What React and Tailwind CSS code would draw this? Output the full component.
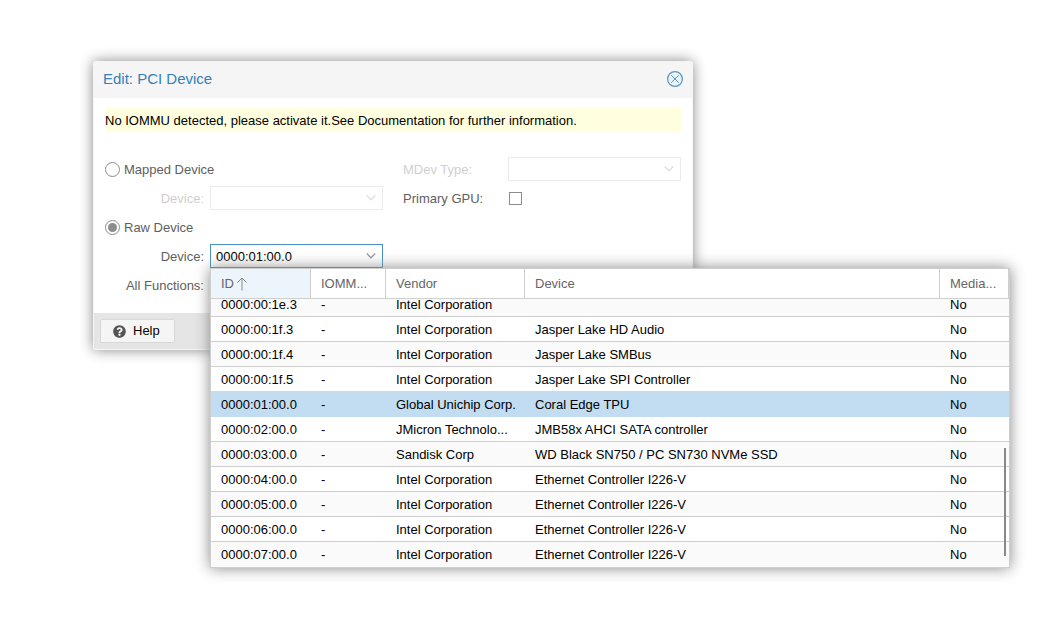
import { useLayoutEffect, useRef } from "react";
import { FaQuestionCircle } from "react-icons/fa";

const DEVICES = [
  ["0000:00:1e.3", "Intel Corporation", ""],
  ["0000:00:1f.3", "Intel Corporation", "Jasper Lake HD Audio"],
  ["0000:00:1f.4", "Intel Corporation", "Jasper Lake SMBus"],
  ["0000:00:1f.5", "Intel Corporation", "Jasper Lake SPI Controller"],
  ["0000:01:00.0", "Global Unichip Corp.", "Coral Edge TPU"],
  ["0000:02:00.0", "JMicron Technolo...", "JMB58x AHCI SATA controller"],
  ["0000:03:00.0", "Sandisk Corp", "WD Black SN750 / PC SN730 NVMe SSD"],
  ["0000:04:00.0", "Intel Corporation", "Ethernet Controller I226-V"],
  ["0000:05:00.0", "Intel Corporation", "Ethernet Controller I226-V"],
  ["0000:06:00.0", "Intel Corporation", "Ethernet Controller I226-V"],
  ["0000:07:00.0", "Intel Corporation", "Ethernet Controller I226-V"],
];
const SELECTED = 4;

function Chevron() {
  return (
    <svg viewBox="0 0 10 6" className="pointer-events-none absolute top-[9px] right-[7px] h-1.5 w-2.5" fill="none" stroke="#999" strokeWidth="1.3" aria-hidden="true">
      <path d="M0.8 0.5 5 4.8 9.2 0.5" />
    </svg>
  );
}

function Field({ id, label, align = "text-left", disabled, children }) {
  return (
    <div className={`flex h-6 items-center ${disabled ? "opacity-30" : ""}`}>
      <label htmlFor={id} className={`w-[105px] shrink-0 pt-0.5 pr-1.5 text-[#606060] ${align}`}>
        {label}
      </label>
      {children}
    </div>
  );
}

function DisabledSelect({ id }) {
  return (
    <div className="relative flex-1">
      <select id={id} disabled className="block h-6 w-full appearance-none border border-[#c0c0c0] bg-white px-1.5" />
      <Chevron />
    </div>
  );
}

function Radio({ id, label, checked }) {
  return (
    <div className="flex h-6 items-center gap-1 text-[#606060]">
      <input
        type="radio"
        name="source"
        id={id}
        defaultChecked={checked}
        className="h-[15px] w-[15px] appearance-none rounded-full border border-[#8c8c8c] bg-white bg-clip-content p-0.5 checked:bg-[#8c8c8c]"
      />
      <label htmlFor={id} className="pt-0.5">{label}</label>
    </div>
  );
}

function Checkbox({ id }) {
  return <input type="checkbox" id={id} className="ml-px h-[13px] w-[13px] appearance-none border border-[#8c8c8c] bg-white" />;
}

function HeaderCell({ children, className = "" }) {
  return (
    <th className={`sticky top-0 h-[30px] truncate border-r border-b border-[#cfcfcf] pr-2 pl-2.5 text-left font-normal text-[#666] ${className}`}>
      {children}
    </th>
  );
}

function DevicePicker() {
  const scroller = useRef(null);
  useLayoutEffect(() => {
    scroller.current.scrollTop = scroller.current.scrollHeight;
  }, []);

  return (
    <div className="absolute top-full left-0 z-10 w-[800px] border border-[#cfcfcf] bg-white shadow-[0_0_14px_#888]">
      <div ref={scroller} className="max-h-[298px] overflow-y-auto [scrollbar-width:none]">
        <table className="w-full table-fixed border-separate border-spacing-0">
          <colgroup>
            <col className="w-[100px]" />
            <col className="w-[75px]" />
            <col className="w-[139px]" />
            <col />
            <col className="w-[69px]" />
          </colgroup>
          <thead>
            <tr>
              <HeaderCell className="bg-[#ecf4fc]">
                <span className="flex items-center gap-[3px]">
                  ID
                  <svg viewBox="0 0 10 14" className="h-3.5 w-2.5" fill="none" stroke="#8c8c8c" aria-hidden="true">
                    <path d="M5 13.5V1M0.5 5.5 5 1 9.5 5.5" />
                  </svg>
                </span>
              </HeaderCell>
              <HeaderCell className="bg-white">IOMM...</HeaderCell>
              <HeaderCell className="bg-white">Vendor</HeaderCell>
              <HeaderCell className="bg-white">Device</HeaderCell>
              <HeaderCell className="bg-white">Media...</HeaderCell>
            </tr>
          </thead>
          <tbody>
            {DEVICES.map(([id, vendor, device], i) => {
              const fill = i === SELECTED ? "bg-[#c2dcf1]" : i % 2 ? "bg-white" : "bg-[#fafafa]";
              const line = i === SELECTED || i === SELECTED - 1 ? "border-[#c2dcf1]" : i === DEVICES.length - 1 ? "border-[#fafafa]" : "border-[#cfcfcf]";
              return (
                <tr key={id} className={fill}>
                  {[id, "-", vendor, device, "No"].map((text, c) => (
                    <td key={c} className={`h-[25px] truncate border-b pt-0.5 pr-2 pl-2.5 ${line}`}>
                      {text}
                    </td>
                  ))}
                </tr>
              );
            })}
          </tbody>
        </table>
      </div>
      <div className="absolute right-[3px] bottom-[11px] h-[108px] w-0.5 bg-[#888]" />
    </div>
  );
}

export default function App() {
  return (
    <main className="min-h-screen overflow-hidden bg-white pt-[61px] pl-[93px] font-['Liberation_Sans',Arial,sans-serif] text-[13px] leading-4 text-black">
      <section role="dialog" aria-labelledby="title" className="max-w-[600px] rounded-[3px] bg-[#f5f5f5] shadow-[0_0_14px_#888]">
        <header className="flex h-[37px] items-center justify-between px-2.5 pb-px">
          <h1 id="title" className="text-[15px] leading-5 text-[#3481b9]">Edit: PCI Device</h1>
          <button type="button" aria-label="Close">
            <svg viewBox="0 0 16 16" className="h-4 w-4" fill="none" stroke="#5a93c0" aria-hidden="true">
              <circle cx="8" cy="8" r="7.4" fill="#e9f3fa" strokeWidth="1.2" />
              <path d="M4.3 4.3 11.7 11.7M11.7 4.3 4.3 11.7" />
            </svg>
          </button>
        </header>

        <div className="mx-px bg-white px-[11px] pt-2.5 pb-4">
          <p className="bg-[#ffffdf] pt-[5px] pb-[3px]">No IOMMU detected, please activate it.See Documentation for further information.</p>
          <div className="mt-[25px] grid grid-cols-2 gap-5">
            <div className="flex flex-col gap-[5px]">
              <Radio id="mapped" label="Mapped Device" />
              <Field id="mapped-device" label="Device:" align="text-right" disabled>
                <DisabledSelect id="mapped-device" />
              </Field>
              <Radio id="raw" label="Raw Device" checked />
              <Field id="raw-device" label="Device:" align="text-right">
                <div className="relative flex-1">
                  <input
                    id="raw-device"
                    role="combobox"
                    aria-expanded="true"
                    defaultValue="0000:01:00.0"
                    className="block h-6 w-full border border-[#4a90c6] bg-white px-[5px] outline-none"
                  />
                  <Chevron />
                  <DevicePicker />
                </div>
              </Field>
              <Field id="all-functions" label="All Functions:" align="text-right">
                <Checkbox id="all-functions" />
              </Field>
            </div>
            <div className="flex flex-col gap-[5px]">
              <Field id="mdev" label="MDev Type:" disabled>
                <DisabledSelect id="mdev" />
              </Field>
              <Field id="gpu" label="Primary GPU:">
                <Checkbox id="gpu" />
              </Field>
            </div>
          </div>
        </div>

        <footer className="rounded-b-[3px] border border-t-0 border-[#f5f5f5] bg-[#e5e5e5] p-1.5">
          <button type="button" className="flex h-6 items-center gap-[7px] rounded-xs border border-[#d8d8d8] bg-[#f5f5f5] pr-3.5 pl-3">
            <FaQuestionCircle className="h-[13px] w-[13px] text-[#555]" aria-hidden="true" />
            Help
          </button>
        </footer>
      </section>
    </main>
  );
}
